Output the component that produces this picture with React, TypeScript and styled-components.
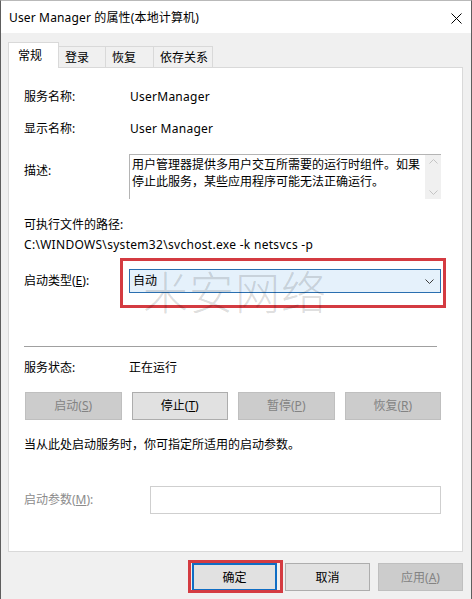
import React from "react";
import styled, { createGlobalStyle } from "styled-components";

const GlobalStyle = createGlobalStyle`
  html, body { margin: 0; padding: 0; background: #8a8a8a; }
  body {
    font-family: "Noto Sans", "Noto Sans CJK SC", sans-serif;
    font-size: 12px;
    color: #000;
  }
  * { box-sizing: border-box; }
`;

const Window = styled.div`
  width: 472px;
  height: 599px;
  background: #f0f0f0;
  border-left: 1px solid #5e5e5e;
  border-right: 1px solid #5e5e5e;
  border-top: 1px solid #b9b9b9;
  display: flex;
  flex-direction: column;
  overflow: hidden;
`;

const TitleBar = styled.div`
  height: 32px;
  background: #fff;
  display: flex;
  align-items: center;
  justify-content: space-between;
  padding: 2px 9px 0 8px;
  line-height: 16px;
`;

const TitleText = styled.span`
  letter-spacing: 0.15px;
`;

const Body = styled.div`
  flex: 1;
  display: flex;
  flex-direction: column;
  padding: 9px 8px 0 7px;
`;

const TabStrip = styled.div`
  display: flex;
  align-items: flex-end;
  height: 26px;
  position: relative;
  z-index: 2;
`;

const Tab = styled.div<{ $active?: boolean; $w: number }>`
  width: ${(p) => p.$w}px;
  height: ${(p) => (p.$active ? 26 : 22)}px;
  padding-left: ${(p) => (p.$active ? 9 : 6)}px;
  display: flex;
  align-items: center;
  background: ${(p) => (p.$active ? "#fff" : "#f0f0f0")};
  border: 1px solid #d9d9d9;
  border-bottom: ${(p) => (p.$active ? "none" : "1px solid #d9d9d9")};
  margin-left: ${(p) => (p.$active ? 0 : -1)}px;
  line-height: 16px;
  padding-top: ${(p) => (p.$active ? 0 : 1)}px;
`;

const Panel = styled.div`
  position: relative;
  height: 485px;
  margin-top: -1px;
  background: #fff;
  border: 1px solid #d9d9d9;
  display: flex;
  flex-direction: column;
  padding: 21px 21px 0 15px;
  line-height: 16px;
`;

const Row = styled.div<{ $label?: number; $top: number; $align?: string }>`
  display: grid;
  grid-template-columns: ${(p) => p.$label ?? 105}px 1fr;
  align-items: ${(p) => p.$align ?? "center"};
  margin-top: ${(p) => p.$top}px;
`;

const Label = styled.div<{ $disabled?: boolean; $padTop?: number }>`
  color: ${(p) => (p.$disabled ? "#8c8c8c" : "#000")};
  padding-top: ${(p) => p.$padTop ?? 0}px;
  white-space: nowrap;
`;

const Value = styled.div`
  padding-left: 1px;
  white-space: nowrap;
  letter-spacing: 0.25px;
`;

const TextLine = styled.div<{ $top: number; $spacing?: number }>`
  margin-top: ${(p) => p.$top}px;
  white-space: nowrap;
  letter-spacing: ${(p) => p.$spacing ?? 0}px;
`;

const DescBox = styled.div`
  height: 45px;
  border: 1px solid #b4b4b4;
  border-right: none;
  border-bottom: none;
  display: flex;
  background: #fff;
`;

const DescText = styled.div`
  flex: 1;
  padding: 1px 0 0 2px;
  line-height: 17px;
`;

const ScrollBar = styled.div`
  width: 16px;
  background: #f0f0f0;
  display: flex;
  flex-direction: column;
  justify-content: space-between;
  align-items: center;
  padding: 4px 0 4px;
`;

const ComboWrap = styled.div`
  position: relative;
`;

const Combo = styled.div`
  height: 24px;
  background: #e5f1fb;
  border: 1px solid #2a6fb0;
  display: flex;
  align-items: center;
  justify-content: space-between;
  padding: 0 6px 0 3px;
`;

const RedMark = styled.div<{ $t: number; $r: number; $b: number; $l: number }>`
  position: absolute;
  top: ${(p) => p.$t}px;
  right: ${(p) => p.$r}px;
  bottom: ${(p) => p.$b}px;
  left: ${(p) => p.$l}px;
  border: 3px solid #d43b41;
  pointer-events: none;
  z-index: 3;
`;

const Separator = styled.div`
  height: 1px;
  background: #a0a0a0;
  margin: 53px 4px 0 0;
`;

const ButtonGrid = styled.div`
  display: grid;
  grid-template-columns: repeat(4, 1fr);
  column-gap: 10px;
  margin: 16px 0 0 1px;
`;

const Button = styled.div<{ $disabled?: boolean }>`
  height: 28px;
  display: flex;
  align-items: center;
  justify-content: center;
  background: ${(p) => (p.$disabled ? "#cccccc" : "#e1e1e1")};
  border: 1px solid ${(p) => (p.$disabled ? "#bfbfbf" : "#adadad")};
  color: ${(p) => (p.$disabled ? "#838383" : "#000")};
`;

const ParamInput = styled.div`
  height: 28px;
  border: 1px solid #cfcfcf;
  background: #fff;
`;

const Watermark = styled.div`
  position: absolute;
  left: 134px;
  top: 198px;
  font-family: "Noto Sans CJK SC", sans-serif;
  font-weight: 300;
  font-size: 45px;
  letter-spacing: 1px;
  line-height: 50px;
  color: rgba(0, 0, 0, 0.15);
  pointer-events: none;
  z-index: 4;
`;

const Footer = styled.div`
  display: flex;
  justify-content: flex-end;
  gap: 8px;
  margin-top: 11px;
  padding-right: 0;
`;

const DialogButton = styled.div<{ $disabled?: boolean; $default?: boolean }>`
  position: relative;
  width: 85px;
  height: 28px;
  display: flex;
  align-items: center;
  justify-content: center;
  background: ${(p) => (p.$disabled ? "#cccccc" : "#e1e1e1")};
  border: ${(p) =>
    p.$default ? "2px solid #0f6dc4" : p.$disabled ? "1px solid #bfbfbf" : "1px solid #adadad"};
  color: ${(p) => (p.$disabled ? "#838383" : "#000")};
`;

const Chevron = ({ up, color }: { up?: boolean; color: string }) => (
  <svg width="9" height="5" viewBox="0 0 9 5">
    <polyline
      points={up ? "0.5,4.5 4.5,0.5 8.5,4.5" : "0.5,0.5 4.5,4.5 8.5,0.5"}
      fill="none"
      stroke={color}
      strokeWidth="1"
    />
  </svg>
);

const CloseIcon = () => (
  <svg width="11" height="11" viewBox="0 0 11 11">
    <path d="M0.5 0.5 L10.5 10.5 M10.5 0.5 L0.5 10.5" stroke="#000" strokeWidth="1" />
  </svg>
);

export default function App() {
  return (
    <>
      <GlobalStyle />
      <Window>
        <TitleBar>
          <TitleText>User Manager 的属性(本地计算机)</TitleText>
          <CloseIcon />
        </TitleBar>
        <Body>
          <TabStrip>
            <Tab $active $w={51}>常规</Tab>
            <Tab $w={48}>登录</Tab>
            <Tab $w={49}>恢复</Tab>
            <Tab $w={60}>依存关系</Tab>
          </TabStrip>
          <Panel>
            <Row $top={0}>
              <Label>服务名称:</Label>
              <Value>UserManager</Value>
            </Row>
            <Row $top={16}>
              <Label>显示名称:</Label>
              <Value>User Manager</Value>
            </Row>
            <Row $top={17} $align="start">
              <Label $padTop={9}>描述:</Label>
              <DescBox>
                <DescText>用户管理器提供多用户交互所需要的运行时组件。如果停止此服务，某些应用程序可能无法正确运行。</DescText>
                <ScrollBar>
                  <Chevron up color="#c4c4c4" />
                  <Chevron color="#c4c4c4" />
                </ScrollBar>
              </DescBox>
            </Row>
            <TextLine $top={18}>可执行文件的路径:</TextLine>
            <TextLine $top={4} $spacing={0.3}>
              C:\WINDOWS\system32\svchost.exe -k netsvcs -p
            </TextLine>
            <Row $top={16}>
              <Label>
                启动类型(<u>E</u>):
              </Label>
              <ComboWrap>
                <Combo>
                  <span>自动</span>
                  <Chevron color="#3c3c3c" />
                </Combo>
                <RedMark $t={-11} $r={-5} $b={-15} $l={-9} />
              </ComboWrap>
            </Row>
            <Separator />
            <Row $top={13}>
              <Label>服务状态:</Label>
              <div>正在运行</div>
            </Row>
            <ButtonGrid>
              <Button $disabled>
                启动(<u>S</u>)
              </Button>
              <Button>
                停止(<u>T</u>)
              </Button>
              <Button $disabled>
                暂停(<u>P</u>)
              </Button>
              <Button $disabled>
                恢复(<u>R</u>)
              </Button>
            </ButtonGrid>
            <TextLine $top={17}>当从此处启动服务时，你可指定所适用的启动参数。</TextLine>
            <Row $top={33} $label={126}>
              <Label $disabled>
                启动参数(<u>M</u>):
              </Label>
              <ParamInput />
            </Row>
            <Watermark>米安网络</Watermark>
          </Panel>
          <Footer>
            <DialogButton $default>
              确定
              <RedMark $t={-5} $r={-8} $b={-4} $l={-6} />
            </DialogButton>
            <DialogButton>取消</DialogButton>
            <DialogButton $disabled>
              应用(<u>A</u>)
            </DialogButton>
          </Footer>
        </Body>
      </Window>
    </>
  );
}
